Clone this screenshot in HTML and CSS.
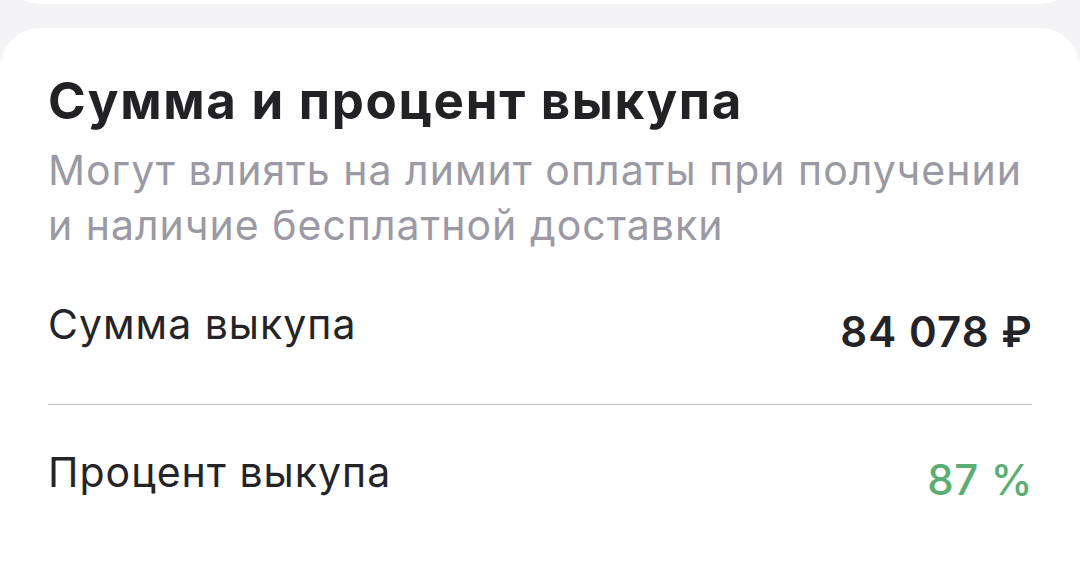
FILE: index.html
```html
<!DOCTYPE html>
<html lang="ru">
<head>
<meta charset="utf-8">
<title>Сумма и процент выкупа</title>
<link rel="stylesheet" href="styles.css">
</head>
<body>
<div class="prev-card"></div>
<section class="card">
  <h1 class="card-title">Сумма и процент выкупа</h1>
  <p class="card-subtitle">Могут влиять на лимит оплаты при получении и наличие бесплатной доставки</p>
  <div class="row row-first">
    <span class="row-label">Сумма выкупа</span>
    <span class="row-value">84 078 ₽</span>
  </div>
  <div class="row row-last">
    <span class="row-label">Процент выкупа</span>
    <span class="row-value row-value-green">87 %</span>
  </div>
</section>
</body>
</html>
```

FILE: styles.css
```css
html, body {
  margin: 0;
  padding: 0;
}
body {
  background: #f4f4f7;
  font-family: Inter, "Noto Sans", "Liberation Sans", sans-serif;
  height: 586px;
  overflow: hidden;
}
.prev-card {
  height: 44px;
  margin-top: -40px;
  background: #ffffff;
  border-radius: 0 0 40px 40px;
}
.card {
  margin-top: 24px;
  background: #ffffff;
  border-radius: 40px 40px 0 0;
  padding: 43px 48px 0;
  height: 515px;
  overflow: hidden;
}
.card-title {
  margin: 0;
  font-size: 51px;
  line-height: 60px;
  font-weight: 700;
  color: #222226;
  letter-spacing: 1.7px;
}
.card-subtitle {
  margin: 12px 0 0;
  font-size: 41px;
  line-height: 55px;
  font-weight: 400;
  color: #9b9aa4;
  letter-spacing: 1px;
}
.row {
  display: flex;
  justify-content: space-between;
  align-items: flex-start;
}
.row-first {
  margin-top: 46px;
  padding-bottom: 47px;
  border-bottom: 1px solid #c4c4c6;
}
.row-last {
  padding-top: 42px;
}
.row-label {
  font-size: 41px;
  line-height: 50px;
  color: #242428;
  letter-spacing: 1px;
}
.row-value {
  padding-top: 8px;
  margin-right: -1px;
  font-size: 42px;
  line-height: 50px;
  font-weight: 600;
  color: #242428;
  letter-spacing: 1.1px;
}
.row-value-green {
  font-weight: 500;
  color: #5aae72;
  letter-spacing: 0.6px;
}
```
